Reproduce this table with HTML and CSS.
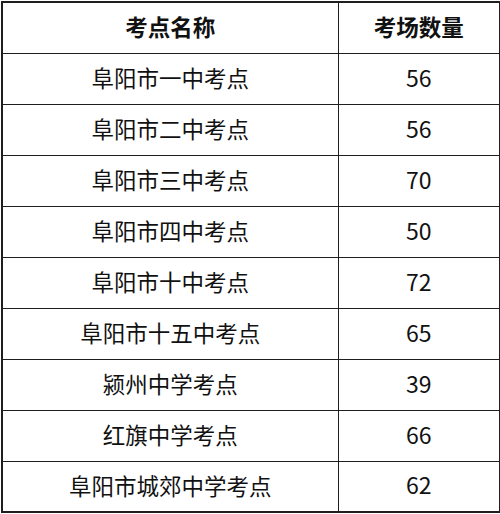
FILE: index.html
```html
<!DOCTYPE html>
<html lang="zh-CN">
<head>
<meta charset="utf-8">
<title>考点考场数量</title>
<link rel="stylesheet" href="styles.css">
</head>
<body>
<table class="sheet">
  <colgroup><col class="c-name"><col class="c-num"></colgroup>
  <thead>
    <tr><th>考点名称</th><th>考场数量</th></tr>
  </thead>
  <tbody>
    <tr><td>阜阳市一中考点</td><td>56</td></tr>
    <tr><td>阜阳市二中考点</td><td>56</td></tr>
    <tr><td>阜阳市三中考点</td><td>70</td></tr>
    <tr><td>阜阳市四中考点</td><td>50</td></tr>
    <tr><td>阜阳市十中考点</td><td>72</td></tr>
    <tr><td>阜阳市十五中考点</td><td>65</td></tr>
    <tr><td>颍州中学考点</td><td>39</td></tr>
    <tr><td>红旗中学考点</td><td>66</td></tr>
    <tr><td>阜阳市城郊中学考点</td><td>62</td></tr>
  </tbody>
</table>
</body>
</html>
```
FILE: styles.css
```css
html, body {
  margin: 0;
  padding: 0;
  background: #fff;
}
body {
  padding: 1px 0 0 1px;
}
.sheet {
  border-collapse: collapse;
  width: 498px;
  table-layout: fixed;
  border: 2px solid #1e1e1e;
  font-family: "Noto Sans CJK SC", "Noto Sans", sans-serif;
  font-size: 22.5px;
  color: #111;
}
.c-name { width: 336px; }
.c-num { width: 162px; }
.sheet tr { height: 51px; }
.sheet th, .sheet td {
  border: 1px solid #1e1e1e;
  text-align: center;
  vertical-align: middle;
  padding: 0 0 3px 0;
  line-height: 1;
}
.sheet th {
  font-weight: 700;
}
.sheet td {
  font-weight: 400;
}
.sheet td + td {
  font-size: 23px;
}
```
